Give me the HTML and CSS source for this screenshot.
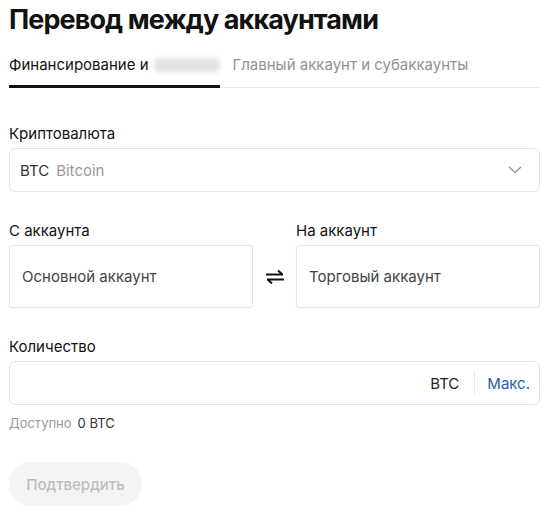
FILE: index.html
```html
<!DOCTYPE html>
<html lang="ru">
<head>
<meta charset="utf-8">
<link rel="stylesheet" href="styles.css">
</head>
<body>
<div class="page">
  <h1 class="title">Перевод между аккаунтами</h1>
  <div class="tabs">
    <div class="tab active">Финансирование и <span class="blur"></span></div>
    <div class="tab">Главный аккаунт и субаккаунты</div>
  </div>

  <div class="field">
    <div class="label">Криптовалюта</div>
    <div class="box select">
      <span class="coin">BTC</span><span class="coin-name">Bitcoin</span>
      <svg class="chev" width="14" height="8" viewBox="0 0 14 8"><path d="M1 1l6 5.5L13 1" fill="none" stroke="#8a8a8a" stroke-width="1.2"/></svg>
    </div>
  </div>

  <div class="accounts">
    <div class="acc">
      <div class="label">С аккаунта</div>
      <div class="box accbox">Основной аккаунт</div>
    </div>
    <div class="swap">
      <svg width="20" height="16" viewBox="0 0 20 16"><path d="M1 5.5h17M13 1.5l4.5 4M19 10.5H2M7 14.5l-4.5-4" fill="none" stroke="#111" stroke-width="2"/></svg>
    </div>
    <div class="acc">
      <div class="label">На аккаунт</div>
      <div class="box accbox">Торговый аккаунт</div>
    </div>
  </div>

  <div class="field qty">
    <div class="label">Количество</div>
    <div class="box amount">
      <span class="unit">BTC</span><span class="divider"></span><span class="max">Макс.</span>
    </div>
    <div class="avail"><span class="avail-label">Доступно</span><span class="avail-val">0 BTC</span></div>
  </div>

  <button class="confirm">Подтвердить</button>
</div>
</body>
</html>
```

FILE: styles.css
```css
html, body { margin: 0; padding: 0; background: #fff; }
body { font-family: Inter, "Noto Sans", sans-serif; color: #121212; }
.page { padding: 2px 15px 0 9px; }
.title { margin: 0; font-size: 27px; line-height: 36px; font-weight: 700; letter-spacing: -0.9px; }
.tabs { display: flex; gap: 13px; margin-top: 17px; border-bottom: 1px solid #e9e9e9; }
.tab { font-size: 15px; line-height: 20px; padding-bottom: 12px; color: #929292; display: flex; align-items: center; }
.tab.active { color: #121212; border-bottom: 3px solid #111; margin-bottom: -1px; padding-bottom: 10px; }
.blur { display: inline-block; width: 66px; height: 14px; margin-left: 5px; background: #e4e4e4; border-radius: 4px; filter: blur(2px); }
.field { margin-top: 36px; }
.label { font-size: 15px; line-height: 20px; color: #121212; margin-bottom: 4px; }
.box { border: 1px solid #e5e5e5; border-radius: 6px; box-sizing: border-box; display: flex; align-items: center; font-size: 15px; }
.select { height: 44px; padding: 0 17px 0 10px; }
.coin { color: #333; }
.coin-name { color: #999; margin-left: 7px; }
.chev { margin-left: auto; }
.accounts { display: flex; align-items: flex-end; margin-top: 29px; }
.acc { flex: 1; }
.accbox { height: 63px; padding: 0 12px; color: #444; border-radius: 3px; box-shadow: 0 0 2px rgba(0,0,0,0.06); }
.swap { width: 43px; height: 63px; display: flex; align-items: center; justify-content: center; }
.qty { margin-top: 29px; }
.amount { height: 44px; justify-content: flex-end; padding: 0 9px; }
.unit { color: #222; }
.divider { width: 1px; height: 22px; background: #e5e5e5; margin: 0 12px 0 15px; }
.max { color: #1d64a8; }
.avail { margin-top: 9px; font-size: 13px; line-height: 18px; }
.avail-label { color: #999; }
.avail-val { color: #333; margin-left: 6px; }
.confirm { margin-top: 30px; width: 133px; height: 44px; border: none; border-radius: 22px; background: #f4f4f4; color: #bdbdbd; font-family: inherit; font-size: 15px; font-weight: 500; }
```
